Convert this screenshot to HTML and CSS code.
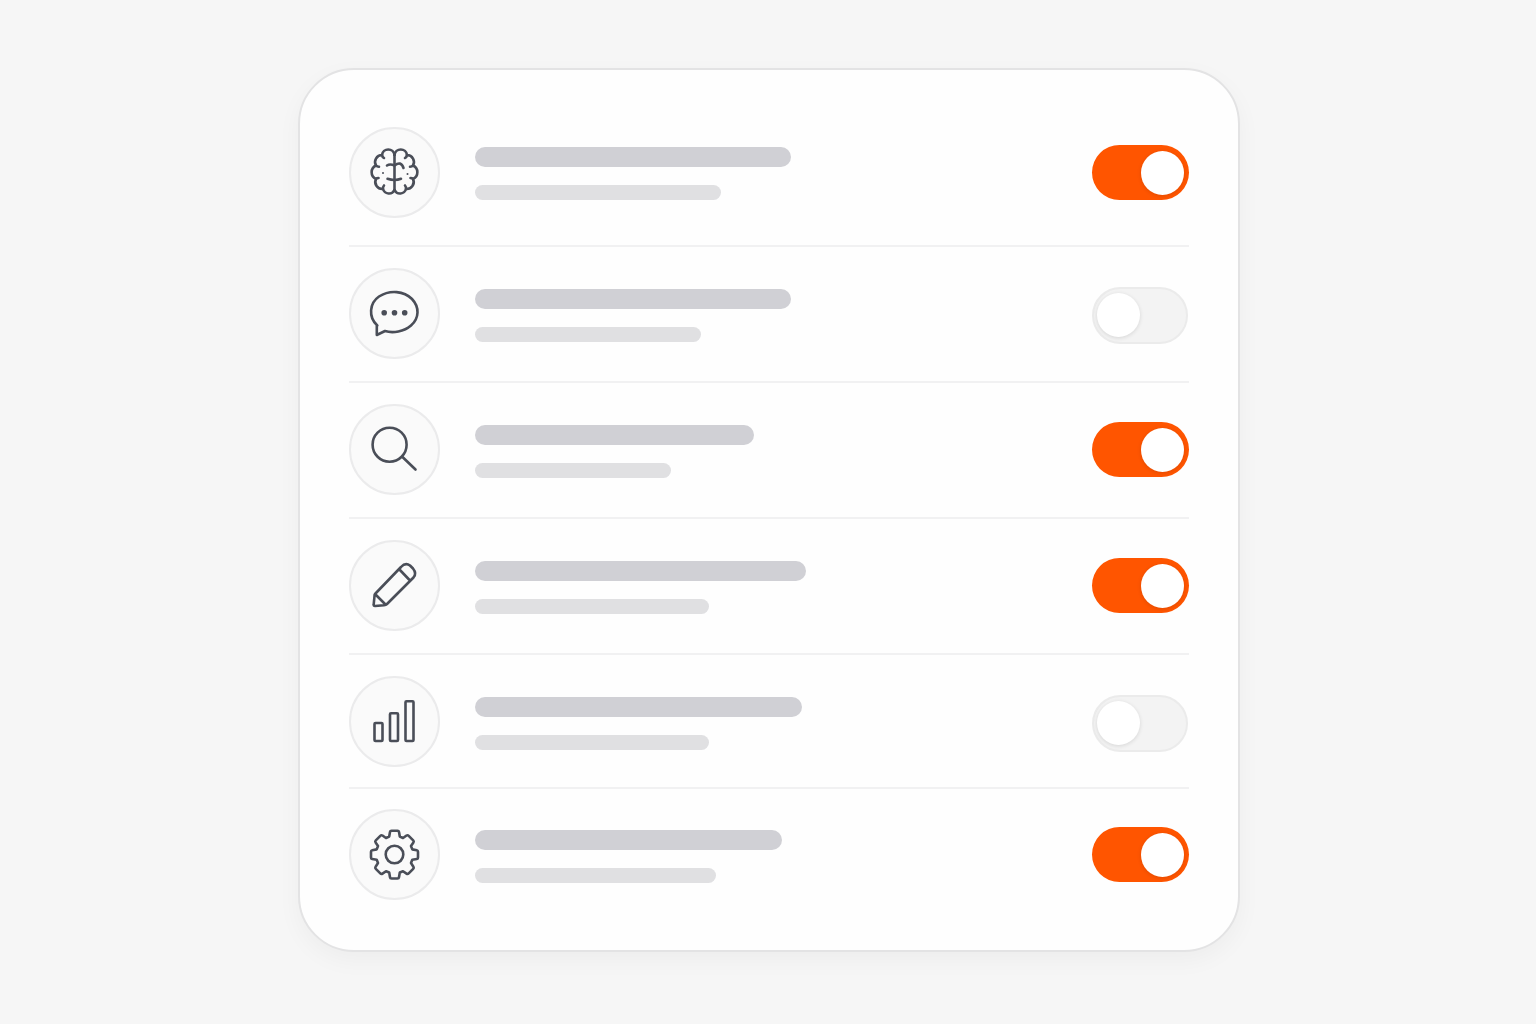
FILE: index.html
```html
<!DOCTYPE html>
<html lang="en">
<head>
<meta charset="utf-8">
<meta name="viewport" content="width=device-width, initial-scale=1">
<title>Settings</title>
<link rel="stylesheet" href="styles.css">
</head>
<body>
<main class="card">
  <ul class="list">
    <li class="row row-first">
      <span class="badge"><svg class="icon" viewBox="7 7 87 87" aria-hidden="true">
        <path d="M50.500 32V69"/>
        <path d="M50.500 33A6.300 6.300 0 0 0 38 33A7 7 0 0 0 32 43.500A7.400 7.400 0 0 0 32 57A7 7 0 0 0 39 67A6.200 6.200 0 0 0 50.500 68"/>
        <path d="M50.500 33A6.300 6.300 0 0 1 63 33A7 7 0 0 1 69 43.500A7.400 7.400 0 0 1 69 57A7 7 0 0 1 62 67A6.200 6.200 0 0 1 50.500 68"/>
        <path d="M38 33Q38.300 35 40 36M63 33Q62.700 35 61 36M32 43.500Q33 44.800 35 44.800M69 43.500Q68 44.800 66 44.800M32 57Q32.800 56 34.500 56M69 57Q68.200 56 66.500 56M39 67Q38.700 65 40 63.500M62 67Q62.300 65 61 63.500"/>
        <path d="M43 43.500Q46 41.500 50.500 43.500Q57 38.500 59.500 46M43.500 56.800Q47 58 50.500 58Q54 58 57 56.800"/>
        <circle class="dot" cx="39" cy="51" r="1"/><circle class="dot" cx="63.500" cy="52" r="1"/>
      </svg></span>
      <span class="lines"><span class="title" style="width:316px"></span><span class="sub" style="width:246px"></span></span>
      <input class="switch" type="checkbox" role="switch" aria-label="Reasoning" checked>
    </li>
    <li class="row">
      <span class="badge"><svg class="icon" viewBox="7 6 87 87" aria-hidden="true">
        <path d="M33.300 61.500C24 53 25.500 39 35 32.500C46 25.500 60 27 68 35C75.500 43 75.500 54 67 61.500C60 67.500 49 69.500 41 67L32.800 71V62Z"/>
        <circle class="dot" cx="40.200" cy="48.800" r="2.800"/><circle class="dot" cx="50.500" cy="48.800" r="2.800"/><circle class="dot" cx="60.700" cy="48.800" r="2.800"/>
      </svg></span>
      <span class="lines"><span class="title" style="width:316px"></span><span class="sub" style="width:226px"></span></span>
      <input class="switch" type="checkbox" role="switch" aria-label="Chat">
    </li>
    <li class="row">
      <span class="badge"><svg class="icon" viewBox="7 6 87 87" aria-hidden="true">
        <circle cx="45.600" cy="44.700" r="17"/><path d="M58.500 57L71.500 69.500"/>
      </svg></span>
      <span class="lines"><span class="title" style="width:279px"></span><span class="sub" style="width:196px"></span></span>
      <input class="switch" type="checkbox" role="switch" aria-label="Search" checked>
    </li>
    <li class="row">
      <span class="badge"><svg class="icon" viewBox="7 6 87 87" aria-hidden="true">
        <path d="M31 58L57 31Q61.500 26 66 29.500L69 32.500Q73 37.500 69.500 41.500L43 68Q42 69 40 69.200L31 70Q29.500 70 29.700 68.500L30.500 60Q30.500 58.500 31 58ZM31.500 58.500L41.500 68.500M55 33L65.500 44"/>
      </svg></span>
      <span class="lines"><span class="title" style="width:331px"></span><span class="sub" style="width:234px"></span></span>
      <input class="switch" type="checkbox" role="switch" aria-label="Writing" checked>
    </li>
    <li class="row row-short">
      <span class="badge"><svg class="icon" viewBox="7 6 87 87" aria-hidden="true">
        <rect x="30.500" y="51" width="8" height="18" rx="1"/><rect x="46" y="41.200" width="8" height="27.800" rx="1"/><rect x="61.500" y="29.200" width="8" height="39.800" rx="1"/>
      </svg></span>
      <span class="lines"><span class="title" style="width:327px"></span><span class="sub" style="width:234px"></span></span>
      <input class="switch" type="checkbox" role="switch" aria-label="Analytics">
    </li>
    <li class="row row-last">
      <span class="badge"><svg class="icon" viewBox="7 6 87 87" aria-hidden="true">
        <path d="M45.200 31.500L46 27Q46.200 25.800 47.500 25.800H53.500Q54.800 25.800 55 27L55.800 31.500L59 33L62.500 30.500Q63.700 29.800 64.700 30.800L69.200 35.300Q70.200 36.300 69.400 37.500L67 41L68.300 44.400L72.800 45.200Q74 45.400 74 46.700V52.500Q74 53.800 72.800 54L68.300 54.800L67 58L69.400 61.700Q70.200 62.900 69.200 63.900L64.700 68.400Q63.700 69.400 62.500 68.600L59 66.200L55.800 67.500L55 72.300Q54.800 73.500 53.500 73.500H47.500Q46.200 73.500 46 72.300L45.200 67.500L42 66.200L38.500 68.600Q37.300 69.400 36.300 68.400L31.800 63.900Q30.800 62.900 31.600 61.700L34 58L32.700 54.800L28.200 54Q27 53.800 27 52.500V46.700Q27 45.400 28.200 45.200L32.700 44.400L34 41L31.600 37.500Q30.800 36.300 31.800 35.300L36.300 30.800Q37.300 29.800 38.500 30.500L42 33Z"/>
        <circle cx="50.500" cy="49.500" r="8.800"/>
      </svg></span>
      <span class="lines"><span class="title" style="width:307px"></span><span class="sub" style="width:241px"></span></span>
      <input class="switch" type="checkbox" role="switch" aria-label="Settings" checked>
    </li>
  </ul>
</main>
</body>
</html>
```
FILE: styles.css
```css
* { box-sizing: border-box; }

body {
  margin: 0;
  padding: 68px 24px 68px 26px;
  background: #f6f6f6;
  font-family: Inter, "Liberation Sans", sans-serif;
}

.card {
  max-width: 942px;
  margin: 0 auto;
  padding: 57px 49px 50px;
  border: 2px solid #e3e3e4;
  border-radius: 56px;
  background: #fefefe;
  box-shadow: 0 8px 24px rgba(0, 0, 0, 0.04);
}

.list {
  margin: 0;
  padding: 0;
  list-style: none;
}

.row {
  display: flex;
  align-items: center;
  gap: 35px;
  padding: 21px 0 22px;
  border-bottom: 2px solid #f1f1f2;
}

.row-first { padding: 0 0 27px; }
.row-short { padding-bottom: 20px; }
.row-last { padding: 20px 0 0; border-bottom: 0; }

.badge {
  flex: none;
  width: 91px;
  height: 91px;
  border: 2px solid #ebebec;
  border-radius: 50%;
  background: #fafafa;
}

.icon {
  display: block;
  width: 87px;
  height: 87px;
  fill: none;
  stroke: #4a4e58;
  stroke-width: 2.6;
  stroke-linecap: round;
  stroke-linejoin: round;
}

.icon .dot {
  fill: #4a4e58;
  stroke: none;
}

.lines {
  flex: 1;
  min-width: 0;
  display: flex;
  flex-direction: column;
  gap: 18px;
  padding-top: 4px;
}

.row-first .lines { padding-top: 2px; }

.title,
.sub {
  max-width: 100%;
  border-radius: 10px;
}

.title {
  height: 20px;
  background: #d0d0d5;
}

.sub {
  height: 15px;
  background: #e0e0e2;
}

.switch {
  appearance: none;
  flex: none;
  display: flex;
  align-items: center;
  width: 96px;
  height: 57px;
  margin: 3px 1px 0 0;
  padding: 0 3px;
  border: 2px solid #ebebeb;
  border-radius: 29px;
  background: #f3f3f3;
  cursor: pointer;
}

.switch::before {
  content: "";
  width: 43px;
  height: 44px;
  border-radius: 50%;
  background: #fff;
  box-shadow: 0 1px 4px rgba(0, 0, 0, 0.12);
}

.switch:checked {
  justify-content: flex-end;
  width: 97px;
  height: 55px;
  margin: 0;
  padding: 0 5px;
  border: 0;
  background: #ff5500;
}

.switch:focus-visible {
  outline: 2px solid #4a4e58;
  outline-offset: 3px;
}
```
